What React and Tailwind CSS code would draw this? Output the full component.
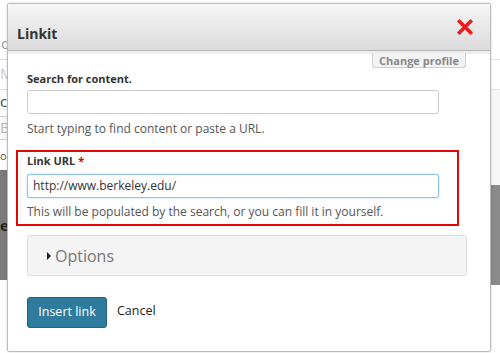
const font = { fontFamily: '"Open Sans", "Liberation Sans", sans-serif' };

const CloseIcon = () => (
  <svg width="16" height="16" viewBox="0 0 16 16" className="block">
    <path d="M2.5 2.5 L13.5 13.5 M13.5 2.5 L2.5 13.5" stroke="#ee1c1c" strokeWidth="3.6" strokeLinecap="square" />
  </svg>
);

export default function App() {
  return (
    <div className="relative w-[500px] h-[353px] overflow-hidden bg-white text-[#333]" style={font}>
      {/* page behind the dialog */}
      <div className="flex h-full justify-between">
        <div className="w-[8px] flex flex-col text-[#999] text-[15px] leading-none">
          <div className="h-[36px]" />
          <div className="h-[24px] border-b border-[#ddd] pl-[1px]">c</div>
          <div className="h-[30px] border-b border-[#ddd] pt-[6px] text-[#ccc]">M</div>
          <div className="h-[26px] pt-[4px] text-[#444]">c</div>
          <div className="h-[24px] border-y border-[#ccc] bg-[#f7f7f7] pt-[3px] text-[#bbb]">B</div>
          <div className="h-[30px] pt-[10px] text-[11px] text-[#555]">or</div>
          <div className="h-[110px] bg-[#7a7a7a] pt-[48px] text-[#222] font-bold">e</div>
        </div>
        <div className="w-[10px] flex flex-col">
          <div className="h-[60px] border-b border-[#e4e4e4]" />
          <div className="h-[30px] border-b border-[#e4e4e4]" />
          <div className="h-[95px] bg-[#f6f6f6]" />
          <div className="h-[100px] bg-[#8a8a8a]" />
        </div>
      </div>

      {/* dialog */}
      <div className="absolute left-[7px] top-[3px] w-[484px] h-[349px] bg-white border border-[#b9b9b9] rounded-[2px] flex flex-col shadow-[0_0_3px_rgba(0,0,0,0.15)]">
        <div className="h-[47px] flex items-center justify-between pl-[9px] pr-[17px] bg-gradient-to-b from-[#f6f6f6] to-[#dcdcdc] border-b border-[#b5b5b5]">
          <span className="text-[14px] font-bold text-[#333] mt-[12px]">Linkit</span>
          <CloseIcon />
        </div>
        <div className="h-[3px] bg-[#eeeeee]" />
        <div className="flex justify-end pr-[24px]">
          <div className="w-[94px] h-[15px] -mt-[1px] flex items-center justify-center bg-[#f3f3f3] border border-t-0 border-[#cfcfcf] rounded-b-[3px] text-[11px] font-bold text-[#888] leading-none">
            Change profile
          </div>
        </div>

        <div className="flex flex-col px-[19px]">
          <label className="mt-[3px] text-[11px] font-bold leading-[16px] text-[#333]">Search for content.</label>
          <div className="mt-[3px] w-[412px] h-[24px] border border-[#cccccc] rounded-[3px] bg-white" />
          <p className="mt-[6px] text-[12px] leading-[18px] text-[#555]">Start typing to find content or paste a URL.</p>

          <div className="mt-[12px] -mx-[11px] w-[443px] border-2 border-[#e00800] px-[9px] pt-[1px] pb-[3px]">
            <label className="block text-[11px] font-bold leading-[16px] text-[#333]">
              Link URL <span className="text-[#e20000]">*</span>
            </label>
            <div className="mt-[5px] w-[412px] h-[24px] border border-[#8fc3ea] rounded-[3px] bg-white shadow-[0_0_2px_rgba(102,175,233,0.6)] flex items-center px-[5px] text-[12px] text-[#333]">
              http://www.berkeley.edu/
            </div>
            <p className="mt-[5px] text-[12px] leading-[18px] text-[#555]">This will be populated by the search, or you can fill it in yourself.</p>
          </div>

          <div className="mt-[9px] w-[440px] h-[41px] bg-[#f4f4f4] border border-[#dddddd] rounded-[3px] flex items-center pl-[19px]">
            <svg width="4" height="8" viewBox="0 0 4 8" className="mr-[4px]">
              <path d="M0 0 L4 4 L0 8 Z" fill="#222" />
            </svg>
            <span className="text-[16px] text-[#777] leading-none">Options</span>
          </div>

          <div className="mt-[21px] flex items-center">
            <button className="w-[80px] h-[31px] bg-[#2f7b9e] border border-[#23617e] rounded-[3px] text-white text-[12.5px]">
              Insert link
            </button>
            <span className="ml-[10px] text-[12.5px] text-[#222] -mt-[3px]">Cancel</span>
          </div>
        </div>
      </div>
    </div>
  );
}
